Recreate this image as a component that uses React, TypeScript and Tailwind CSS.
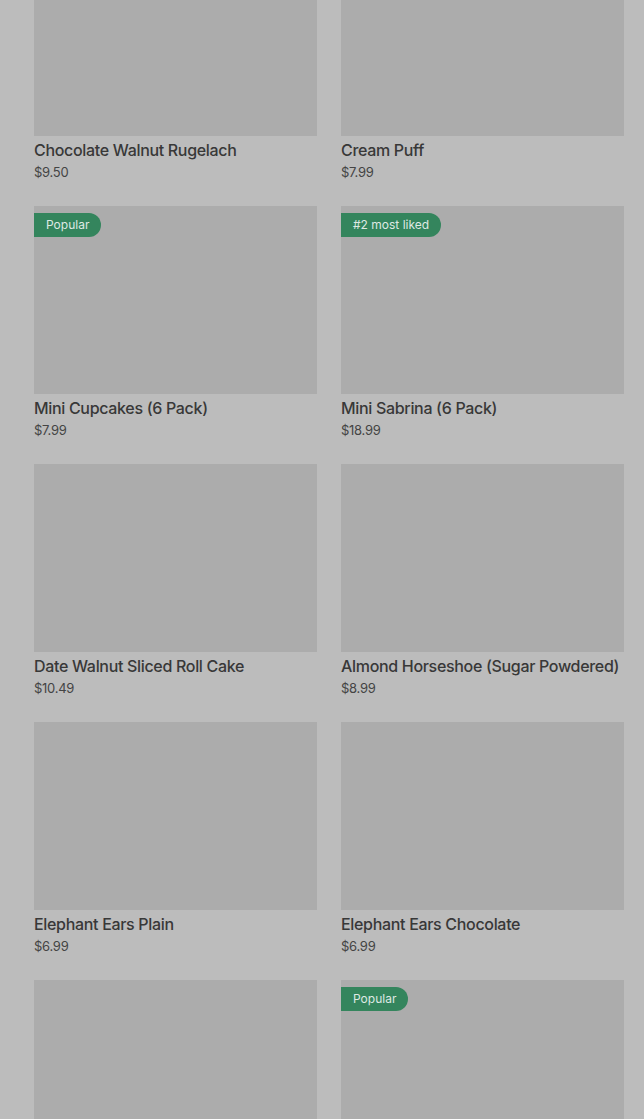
import React from 'react';

interface Product {
  name?: string;
  price?: string;
  badge?: string;
}

const products: Product[] = [
  { name: 'Chocolate Walnut Rugelach', price: '$9.50' },
  { name: 'Cream Puff', price: '$7.99' },
  { name: 'Mini Cupcakes (6 Pack)', price: '$7.99', badge: 'Popular' },
  { name: 'Mini Sabrina (6 Pack)', price: '$18.99', badge: '#2 most liked' },
  { name: 'Date Walnut Sliced Roll Cake', price: '$10.49' },
  { name: 'Almond Horseshoe (Sugar Powdered)', price: '$8.99' },
  { name: 'Elephant Ears Plain', price: '$6.99' },
  { name: 'Elephant Ears Chocolate', price: '$6.99' },
  // last row is cut off by the viewport, only the images show
  {},
  { badge: 'Popular' },
];

const ProductCard = ({ product }: { product: Product }) => (
  <div className="flex flex-col">
    <div className="relative h-[188px] bg-[#acacac]">
      {product.badge && (
        <span className="absolute left-0 top-[7px] flex h-6 items-center rounded-r-full bg-[#34855d] px-3 text-[12px] text-[#dfe9e3]">
          {product.badge}
        </span>
      )}
    </div>
    {product.name && (
      <>
        <p className="mt-[2px] whitespace-nowrap text-[16px] font-medium leading-6 tracking-[-0.02em] text-[#383838]">
          {product.name}
        </p>
        <p className="text-[13px] leading-5 tracking-[-0.02em] text-[#444444]">{product.price}</p>
      </>
    )}
  </div>
);

export default function App() {
  return (
    <div
      className="h-[1119px] overflow-hidden bg-[#bcbcbc] pl-[34px] pr-5"
      style={{ fontFamily: 'Inter, "Noto Sans", sans-serif' }}
    >
      <div className="-mt-[52px] grid grid-cols-2 gap-x-6 gap-y-6">
        {products.map((p, i) => (
          <ProductCard key={p.name ?? `tail-${i}`} product={p} />
        ))}
      </div>
    </div>
  );
}
